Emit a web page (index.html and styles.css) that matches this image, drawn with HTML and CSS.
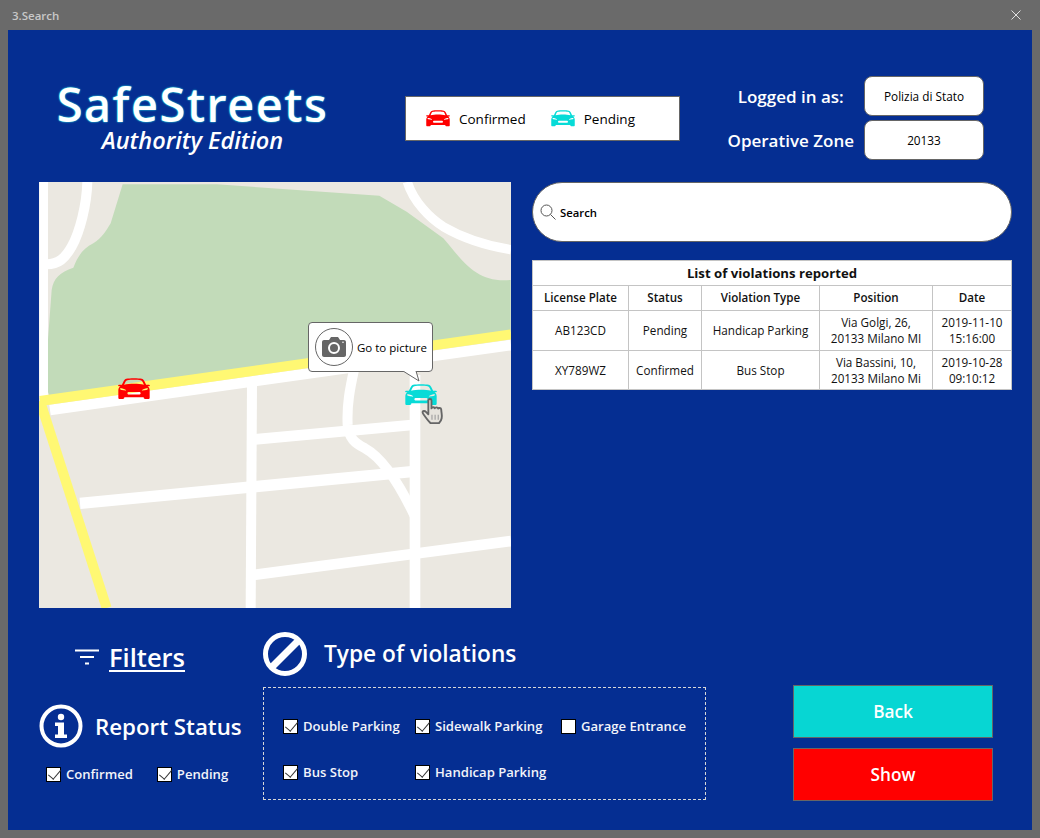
FILE: index.html
```html
<!DOCTYPE html>
<html lang="en">
<head>
<meta charset="utf-8">
<title>3.Search</title>
<link rel="stylesheet" href="styles.css">
</head>
<body>
<svg class="defs" width="0" height="0" aria-hidden="true">
  <symbol id="car" viewBox="1.500 .4 29 21.600" preserveAspectRatio="none">
    <path fill="currentColor" fill-rule="evenodd" d="M9 1.200C12 .4 20 .4 23 1.200c1 .3 1.700 1 2.300 2.200L27 7h2.500c.6 0 .9.400.9.800s-.4.800-1 .8H28.300c1.300 1.100 1.900 2.300 1.900 3.800v7.300c0 .8-.5 1.300-1.200 1.300h-3c-.7 0-1.200-.4-1.200-1.100v-.6H7.200v.6c0 .7-.5 1.100-1.200 1.100H3c-.7 0-1.200-.5-1.200-1.300v-7.300c0-1.500.6-2.700 1.900-3.800H2.600c-.6 0-1-.4-1-.8s.3-.8.900-.8H5l1.700-3.600C7.300 2.200 8 1.500 9 1.200zM10 2.600c-.8.200-1.300.6-1.700 1.400L7 7.100C12 5.800 20 5.800 25 7.100L23.700 4c-.4-.8-.9-1.200-1.700-1.400-3-.6-9-.6-12 0zM3.400 10.500c-.1.900.5 1.500 1.400 1.700l3.700.5c.4 0 .5-.4.200-.6-1.500-1-3.300-1.600-5.300-1.600zM28.600 10.500c-2 0-3.800.6-5.300 1.600-.3.200-.2.600.2.600l3.700-.5c.9-.2 1.500-.8 1.400-1.700zM11.500 14.200c-.9 0-1.500.5-1.500 1.200s.6 1.200 1.500 1.200h9c.9 0 1.500-.5 1.500-1.200s-.6-1.200-1.500-1.200z"/>
  </symbol>
</svg>
<div class="window">
  <header class="titlebar">
    <span class="title">3.Search</span>
    <svg class="close" viewBox="0 0 10 10"><path d="M.5.500l9 9M9.500.500l-9 9"/></svg>
  </header>
  <main class="content">
    <section class="top">
      <div class="logo">
        <div class="logo-name">SafeStreets</div>
        <div class="logo-sub">Authority Edition</div>
      </div>
      <div class="legend">
        <div class="legend-item"><svg class="legend-car red"><use href="#car"/></svg><span>Confirmed</span></div>
        <div class="legend-item"><svg class="legend-car cyan"><use href="#car"/></svg><span>Pending</span></div>
      </div>
      <div class="login">
        <span class="login-label">Logged in as:</span><div class="login-box">Polizia di Stato</div>
        <span class="login-label">Operative Zone</span><div class="login-box">20133</div>
      </div>
    </section>

    <section class="middle">
      <div class="map">
        <svg class="map-art" viewBox="27 21 1416 1278">
          <rect x="27" y="21" width="1416" height="1278" fill="#ebe8e1"/>
          <path fill="#c2dbb9" d="M278 28L560 28L1048 62L1130 110L1240 190C1300 260 1340 325 1442 315L1442 470L60 665L44 628L65 345C70 310 90 292 130 278C145 240 160 220 190 205C215 190 230 165 242 145z"/>
          <g class="road">
            <path stroke-width="26" d="M41 21V668"/>
            <path stroke-width="30" d="M172 21C170 90 150 170 125 215C105 250 85 268 50 268"/>
            <path stroke-width="28" d="M1132 21C1150 80 1200 130 1240 155C1300 190 1370 212 1443 224"/>
            <path stroke-width="32" d="M60 705L1443 510"/>
            <path stroke-width="30" d="M666 625L662 1299"/>
            <path stroke-width="32" d="M1155 600V1299"/>
            <path stroke-width="32" d="M675 793L1145 750"/>
            <path stroke-width="34" d="M150 985L1145 890"/>
            <path stroke-width="32" d="M670 1200L1443 1098"/>
            <path stroke-width="30" d="M972 585C960 640 950 690 953 750C956 790 975 805 1005 820C1060 850 1110 930 1155 1025"/>
          </g>
          <g class="road-main">
            <path d="M30 678L1443 478"/>
            <path d="M30 678L230 1299"/>
          </g>
        </svg>
        <svg class="map-car red car-one"><use href="#car"/></svg>
        <svg class="map-car cyan car-two"><use href="#car"/></svg>
        <svg class="hand" viewBox="0 0 21 25">
          <path fill="#e6e3dc" stroke="#666" stroke-width="1.800" stroke-linejoin="round" d="M6.500 2.500c0-2 3-2 3 0v7.500c.3-1.500 3-1.500 3.200 0 .3-1.300 3-1.300 3.200.2.400-1 2.900-.8 3 .8.100 3.500 1.100 5.500.4 8.500-.4 2.300-1.500 3.400-2.500 4.600H8.500c-1.700-2-3-3.300-5-6.100C2 16 .6 14.500 1 13.300c.5-1.200 2.200-1 3.200 0l2.300 2.400z"/>
          <path stroke="#999" stroke-width="1" d="M10 16v5M13 16v5M16 16v5"/>
        </svg>
        <div class="bubble">
          <span class="bubble-icon">
            <svg viewBox="0 0 24 20"><path fill="#666" fill-rule="evenodd" d="M2 3h5l2-3h7l2 3h4c1 0 2 .8 2 2v13c0 1.200-1 2-2 2H2c-1 0-2-.8-2-2V5c0-1.200 1-2 2-2zM12 5a6 6 0 1 0 0 12a6 6 0 0 0 0-12zM12 7a4 4 0 1 1 0 8a4 4 0 0 1 0-8zM21 4.500a.8.800 0 1 0 0 1.600a.8.800 0 0 0 0-1.600z"/></svg>
          </span>
          <span>Go to picture</span>
          <svg class="bubble-tail" viewBox="0 0 20 12"><path fill="#fff" stroke="#666" d="M1 0L17 10L14 0"/></svg>
        </div>
      </div>

      <div class="side">
        <div class="search">
          <svg class="search-icon" viewBox="0 0 16 16"><circle cx="6.500" cy="6.500" r="5.500"/><path d="M10.500 10.500L15.500 15.500"/></svg>
          <span>Search</span>
        </div>
        <table class="violations">
          <colgroup><col class="c1"><col class="c2"><col class="c3"><col class="c4"><col class="c5"></colgroup>
          <thead>
            <tr><th colspan="5" class="caption-cell">List of violations reported</th></tr>
            <tr><th>License Plate</th><th>Status</th><th>Violation Type</th><th>Position</th><th>Date</th></tr>
          </thead>
          <tbody>
            <tr><td>AB123CD</td><td>Pending</td><td>Handicap Parking</td><td>Via Golgi, 26,<br>20133 Milano MI</td><td>2019-11-10<br>15:16:00</td></tr>
            <tr><td>XY789WZ</td><td>Confirmed</td><td>Bus Stop</td><td>Via Bassini, 10,<br>20133 Milano Mi</td><td>2019-10-28<br>09:10:12</td></tr>
          </tbody>
        </table>
      </div>
    </section>

    <section class="bottom">
      <div class="filters">
        <div class="filters-head">
          <svg class="filter-icon" viewBox="0 0 24 16"><path d="M0 1.500H24M5 8H19M10 14.500H14"/></svg>
          <span class="filters-title">Filters</span>
        </div>
        <div class="status-head">
          <svg class="round-icon" viewBox="0 0 44 44"><circle class="ring" cx="22" cy="22" r="19.500"/><circle class="fill" cx="22" cy="13" r="3.200"/><path class="fill" d="M16 18.500h9v12h3v3.500H16v-3.500h3v-8.500h-3z"/></svg>
          <span class="section-title">Report Status</span>
        </div>
        <div class="status-checks">
          <label class="check"><span class="box on"></span>Confirmed</label>
          <label class="check"><span class="box on"></span>Pending</label>
        </div>
      </div>
      <div class="types">
        <div class="types-head">
          <svg class="round-icon" viewBox="0 0 44 44"><circle class="ring ring-bold" cx="22" cy="22" r="19.500"/><path class="bar" d="M8.500 35.500L35.500 8.500"/></svg>
          <span class="section-title section-title-wide">Type of violations</span>
        </div>
        <div class="types-box">
          <label class="check"><span class="box on"></span>Double Parking</label>
          <label class="check"><span class="box on"></span>Sidewalk Parking</label>
          <label class="check"><span class="box"></span>Garage Entrance</label>
          <label class="check"><span class="box on"></span>Bus Stop</label>
          <label class="check"><span class="box on"></span>Handicap Parking</label>
        </div>
      </div>
      <div class="actions">
        <button class="btn back">Back</button>
        <button class="btn show">Show</button>
      </div>
    </section>
  </main>
</div>
</body>
</html>
```
FILE: styles.css
```css
* { box-sizing: border-box; }
html, body { margin: 0; padding: 0; }
body { width: 1040px; height: 838px; overflow: hidden; background: #6a6a6a; font-family: "Open Sans", "Noto Sans", sans-serif; }
.defs { position: absolute; }
.window { width: 1040px; height: 838px; padding: 0 8px 8px; display: flex; flex-direction: column; background: #6a6a6a; }
.titlebar { height: 30px; display: flex; align-items: center; justify-content: space-between; padding: 0 11px 0 4px; }
.title { color: #c8c8c8; font-size: 11.500px; font-weight: 600; }
.close { width: 10px; height: 10px; }
.close path { stroke: #eee; stroke-width: .9; fill: none; }
.content { flex: 1; background: #052e92; display: flex; flex-direction: column; padding: 0 20px 0 31px; color: #fff; }

.top { height: 152px; display: flex; position: relative; }
.logo { width: 290px; padding: 51px 0 0 17px; text-align: center; }
.logo-name { font-family: "Noto Sans", sans-serif; font-size: 47px; line-height: 46px; font-weight: 500; color: #fff; letter-spacing: 1.600px; text-shadow: 0 0 2px #2fe0e6, 0 0 1px #2fe0e6; white-space: nowrap; }
.logo-sub { font-size: 23.500px; line-height: 26px; font-style: italic; font-weight: 600; white-space: nowrap; }
.legend { width: 275px; height: 45px; margin: 66px 0 0 76px; background: #fff; border: 1px solid #666; display: flex; align-items: center; padding-left: 20px; gap: 25px; color: #000; font-size: 13.500px; font-weight: 500; }
.legend-item { display: flex; align-items: center; gap: 9px; }
.legend-car { width: 24px; height: 17px; }
.red { color: #ff0000; }
.cyan { color: #07dbd7; }
.login { margin: 46px 28px 0 auto; display: grid; grid-template-columns: auto 120px; grid-template-rows: 40px 40px; row-gap: 4px; column-gap: 10px; align-items: center; justify-items: center; }
.login-label { font-size: 17px; font-weight: 600; white-space: nowrap; }
.login-box { width: 120px; height: 40px; background: #fff; border: 1px solid #666; border-radius: 8px; color: #000; font-size: 11.800px; display: flex; align-items: center; justify-content: center; }

.middle { display: flex; gap: 21px; height: 426px; }
.map { width: 472px; height: 426px; position: relative; flex: none; color: #111; }
.map-art { display: block; width: 472px; height: 426px; }
.road path { stroke: #fff; fill: none; }
.road-main path { stroke: #fff873; stroke-width: 30; fill: none; }
.map-car { position: absolute; width: 32px; height: 22px; }
.car-one { left: 79px; top: 196px; }
.car-two { left: 366px; top: 202px; }
.hand { position: absolute; left: 382px; top: 216px; width: 23px; height: 26px; }
.bubble { position: absolute; left: 269px; top: 140px; width: 125px; height: 50px; background: #fff; border: 1px solid #666; border-radius: 4px; display: flex; align-items: center; gap: 4px; padding-left: 6px; font-size: 11.500px; color: #000; white-space: nowrap; }
.bubble-icon { width: 38px; height: 38px; border: 1px solid #666; border-radius: 50%; display: flex; align-items: center; justify-content: center; flex: none; }
.bubble-icon svg { width: 24px; height: 20px; }
.bubble-tail { position: absolute; left: 93px; top: 48px; width: 20px; height: 12px; }

.side { width: 480px; }
.search { height: 60px; background: #fff; border: 1px solid #666; border-radius: 30px; display: flex; align-items: center; padding-left: 7px; gap: 4px; color: #000; font-size: 11.300px; font-weight: 600; }
.search-icon { width: 16px; height: 16px; }
.search-icon circle, .search-icon path { fill: none; stroke: #555; stroke-width: 1; }
.violations { margin-top: 18px; width: 479px; height: 129px; background: #fff; color: #111; border-collapse: collapse; border: 1px solid #666; font-size: 11.700px; text-align: center; table-layout: fixed; }
.violations th, .violations td { border: 1px solid #c4c4c4; padding: 0; font-weight: 400; line-height: 16px; }
.violations th { font-weight: 600; height: 25px; font-size: 11.600px; }
.violations td { height: 39.500px; }
.violations .caption-cell { font-size: 13.200px; font-weight: 700; }
.c1 { width: 96px; } .c2 { width: 73px; } .c3 { width: 118px; } .c4 { width: 113px; } .c5 { width: 79px; }

.bottom { display: flex; flex: 1; position: relative; }
.filters { width: 224px; flex: none; }
.filters-head { display: flex; align-items: center; gap: 10px; margin: 32px 0 0 36px; height: 34px; }
.filter-icon { width: 24px; height: 16px; }
.filter-icon path { stroke: #fff; stroke-width: 2; fill: none; }
.filters-title { font-size: 25.500px; font-weight: 600; text-decoration: underline; text-underline-offset: 3px; text-decoration-thickness: 1.500px; }
.status-head { display: flex; align-items: center; gap: 12px; margin-top: 30px; height: 44px; }
.round-icon { width: 44px; height: 44px; flex: none; }
.ring { fill: none; stroke: #fff; stroke-width: 4; }
.ring-bold { stroke-width: 5; }
.status-head .fill { fill: #fff; }
.bar { stroke: #fff; stroke-width: 7; fill: none; }
.section-title { font-size: 22.300px; font-weight: 600; white-space: nowrap; }
.section-title-wide { font-size: 22.700px; position: relative; top: -1px; }
.status-checks { display: flex; gap: 24px; margin: 17px 0 0 7px; }
.check { display: flex; align-items: center; gap: 5px; font-size: 13.100px; font-weight: 600; white-space: nowrap; color: #f2f4fa; }
.box { width: 15px; height: 15px; background: #fff; border: 1px solid #000; position: relative; flex: none; }
.box.on::after { content: ""; position: absolute; left: 4px; top: -1px; width: 6px; height: 11px; border: solid #333; border-width: 0 1px 1px 0; transform: rotate(40deg); }
.types { width: 443px; flex: none; }
.types-head { display: flex; align-items: center; gap: 17px; margin-top: 24px; height: 44px; }
.types-box { margin-top: 11px; width: 443px; height: 113px; border: 1px dashed #d8d8d8; display: grid; grid-template-columns: 132px 146px auto; grid-auto-rows: 46px; align-items: center; padding: 15px 0 0 19px; }
.actions { display: flex; flex-direction: column; gap: 10px; margin: 77px 0 0 87px; }
.btn { width: 200px; height: 53px; border: 1px solid #666; color: #fff; font-family: inherit; font-size: 17.200px; font-weight: 600; padding: 0; }
.back { background: #07d6d3; }
.show { background: #ff0000; }
```
